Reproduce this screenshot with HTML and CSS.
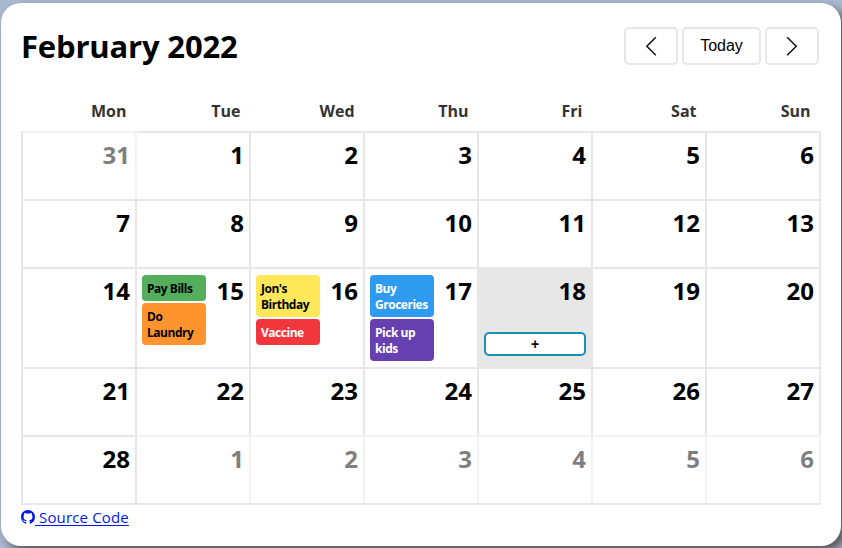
FILE: index.html
```html
<!DOCTYPE html>
<html lang="en">
<head>
<meta charset="utf-8">
<title>Calendar</title>
<link rel="stylesheet" href="styles.css">
</head>
<body>
<main class="card">
  <header class="header">
    <h1 class="title">February 2022</h1>
    <nav class="controls">
      <button class="btn arrow" aria-label="Previous month"><svg width="12" height="20" viewBox="0 0 12 20"><path d="M10.8 1.2 1.8 10.2l9 9"/></svg></button>
      <button class="btn today-btn">Today</button>
      <button class="btn arrow" aria-label="Next month"><svg width="12" height="20" viewBox="0 0 12 20"><path d="M1.2 1.2 10.2 10.2l-9 9"/></svg></button>
    </nav>
  </header>
  <div class="weekdays"><span>Mon</span><span>Tue</span><span>Wed</span><span>Thu</span><span>Fri</span><span>Sat</span><span>Sun</span></div>
  <section class="grid">
    <div class="day muted"><b>31</b></div><div class="day"><b>1</b></div><div class="day"><b>2</b></div><div class="day"><b>3</b></div><div class="day"><b>4</b></div><div class="day"><b>5</b></div><div class="day"><b>6</b></div>
    <div class="day"><b>7</b></div><div class="day"><b>8</b></div><div class="day"><b>9</b></div><div class="day"><b>10</b></div><div class="day"><b>11</b></div><div class="day"><b>12</b></div><div class="day"><b>13</b></div>
    <div class="day"><b>14</b></div>
    <div class="day"><div class="events"><div class="event green">Pay Bills</div><div class="event orange">Do<br>Laundry</div></div><b>15</b></div>
    <div class="day"><div class="events"><div class="event yellow">Jon's<br>Birthday</div><div class="event red">Vaccine</div></div><b>16</b></div>
    <div class="day"><div class="events"><div class="event blue">Buy<br>Groceries</div><div class="event purple">Pick up<br>kids</div></div><b>17</b></div>
    <div class="day current"><b>18</b><button class="add">+</button></div>
    <div class="day"><b>19</b></div><div class="day"><b>20</b></div>
    <div class="day"><b>21</b></div><div class="day"><b>22</b></div><div class="day"><b>23</b></div><div class="day"><b>24</b></div><div class="day"><b>25</b></div><div class="day"><b>26</b></div><div class="day"><b>27</b></div>
    <div class="day"><b>28</b></div><div class="day muted"><b>1</b></div><div class="day muted"><b>2</b></div><div class="day muted"><b>3</b></div><div class="day muted"><b>4</b></div><div class="day muted"><b>5</b></div><div class="day muted"><b>6</b></div>
  </section>
  <a class="source" href="#"><svg width="14" height="14" viewBox="0 0 16 16"><path d="M8 0C3.58 0 0 3.58 0 8c0 3.54 2.29 6.53 5.47 7.59.4.07.55-.17.55-.38 0-.19-.01-.82-.01-1.49-2.01.37-2.53-.49-2.69-.94-.09-.23-.48-.94-.82-1.13-.28-.15-.68-.52-.01-.53.63-.01 1.08.58 1.23.82.72 1.21 1.87.87 2.33.66.07-.52.28-.87.51-1.07-1.78-.2-3.64-.89-3.64-3.95 0-.87.31-1.59.82-2.15-.08-.2-.36-1.02.08-2.12 0 0 .67-.21 2.2.82.64-.18 1.32-.27 2-.27s1.36.09 2 .27c1.53-1.04 2.2-.82 2.2-.82.44 1.1.16 1.92.08 2.12.51.56.82 1.27.82 2.15 0 3.07-1.87 3.75-3.65 3.95.29.25.54.73.54 1.48 0 1.07-.01 1.93-.01 2.2 0 .21.15.46.55.38A8.01 8.01 0 0 0 16 8c0-4.42-3.58-8-8-8z"/></svg><span>&nbsp;Source Code</span></a>
</main>
</body>
</html>
```
FILE: styles.css
```css
* { box-sizing: border-box; }
body {
  margin: 0;
  height: 548px;
  padding: 3px 1px 2px;
  overflow: hidden;
  background: #a9b9d1;
  font-family: "Segoe UI", "Open Sans", "Noto Sans", sans-serif;
}
.card {
  height: 543px;
  padding: 24px 20px 0;
  border-radius: 20px;
  background: #fff;
  box-shadow: 5px 5px 10px #555;
}
.header {
  display: flex;
  justify-content: space-between;
  height: 38px;
  padding-right: 2px;
}
.title { margin: 0; font-size: 31px; line-height: 38px; font-weight: 700; letter-spacing: -.17px; white-space: nowrap; }
.controls { display: flex; gap: 4px; }
.btn {
  display: flex;
  align-items: center;
  justify-content: center;
  height: 38px;
  padding: 0;
  border: 2px solid #e7e7e7;
  border-radius: 5px;
  background: #fff;
  color: #000;
  font: 16px/20px "Liberation Sans", Arial, sans-serif;
}
.arrow { width: 54px; }
.today-btn { width: 79px; }
.arrow svg { fill: none; stroke: #111; stroke-width: 1.5; }
.weekdays {
  display: grid;
  grid-template-columns: repeat(7, 114px);
  margin: 34px 0 0 2px;
  height: 32px;
  color: #333;
  font-size: 16px;
  line-height: 24px;
  font-weight: 700;
  text-align: right;
}
.weekdays span { padding-right: 10.5px; }
.grid {
  display: grid;
  grid-template-columns: repeat(7, 114px);
  grid-template-rows: 68px 68px 100px 68px 68px;
  border-left: 2px solid #e7e7e7;
  border-bottom: 2px solid #e7e7e7;
}
.day {
  display: flex;
  flex-wrap: wrap;
  justify-content: flex-end;
  align-content: flex-start;
  padding: 6px 5px 0;
  border-top: 2px solid #e7e7e7;
  border-right: 2px solid #e7e7e7;
}
.day b { font-size: 24px; line-height: 32px; }
.muted { opacity: .5; }
.current { background: #e7e7e7; }
.events { display: grid; grid-template-columns: 64px; gap: 2px; margin-right: auto; }
.event {
  padding: 6px 5px 4px;
  border-radius: 4px;
  font-size: 12px;
  line-height: 16px;
  font-weight: 700;
  letter-spacing: -.48px;
  white-space: nowrap;
}
.green { background: #55ae5c; }
.orange { background: #ff942f; }
.yellow { background: #ffe75a; }
.red { background: #f1363e; color: #fff; }
.blue { background: #2e9bee; color: #fff; }
.purple { background: #663fb1; color: #fff; }
.add {
  width: 102px;
  height: 24px;
  margin-top: 25px;
  padding: 0;
  border: 2px solid #1b90b3;
  border-radius: 5px;
  background: #fff;
  color: #000;
  font: 700 14px/18px "Liberation Sans", Arial, sans-serif;
}
.source {
  display: flex;
  align-items: center;
  height: 23px;
  color: #0018ee;
  font-size: 15px;
  letter-spacing: .15px;
  text-decoration: none;
}
.source span { line-height: 20px; text-decoration: underline; text-underline-offset: 2px; }
.source svg { fill: currentColor; }
```
